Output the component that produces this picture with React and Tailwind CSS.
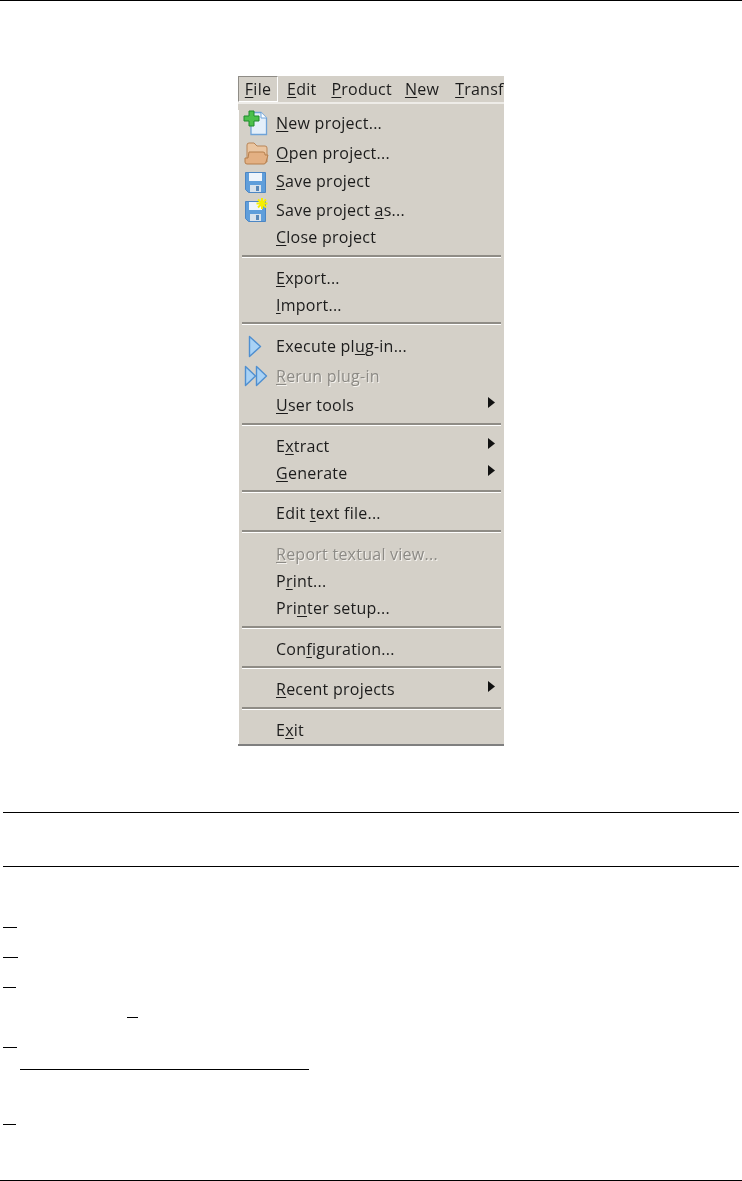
const FONT = "font-['Open_Sans','Liberation_Sans',sans-serif]";

function NewIcon() {
  return (
    <svg width="26" height="26" viewBox="0 0 26 26">
      <path d="M8 2.500h10l5.500 5.500v16.500H8z" fill="#e4effa" stroke="#6fa3d8" strokeWidth="1.300" />
      <path d="M18 2.500V8h5.500" fill="#fff" stroke="#6fa3d8" strokeWidth="1" />
      <path d="M6 1h5v5h5v5h-5v5H6v-5H1V6h5z" fill="#4cc04c" stroke="#1f8a2c" strokeWidth="1" />
    </svg>
  );
}

function FolderIcon() {
  return (
    <svg width="25" height="23" viewBox="0 0 25 23">
      <path d="M3 20V3q0-2 2-2h5l3 3h8q2 0 2 2v14z" fill="#eac6a2" stroke="#b98556" strokeWidth="1" />
      <path d="M5 10h14q2 0 2 2v1h3l-2 7q-.5 2-2 2H3q-2 0-2-2v-4h3z" fill="#e3b083" stroke="#b57e4c" strokeWidth="1" />
    </svg>
  );
}

function FloppyIcon({ star }) {
  return (
    <svg width="24" height="24" viewBox="0 0 24 24">
      <path d="M1.500 3.500h20v20h-17l-3-3z" fill="#5f9edb" stroke="#4c86c4" strokeWidth="1" />
      <path d="M5 4h13v8H5z" fill="#eef4fb" />
      <path d="M6 16h11v7H6z" fill="#d8e2ec" />
      <path d="M12 17h3v5h-3z" fill="#5a88b8" />
      {star && <path d="M18 0v11M12.500 5.500h11M14 1.500l8 8M22 1.500l-8 8" stroke="#f5ee00" strokeWidth="2" />}
    </svg>
  );
}

function PlayIcon() {
  return (
    <svg className="mr-[2px]" width="14" height="23" viewBox="0 0 14 23">
      <path d="M1.500 1.500v20L12.500 11.500z" fill="#a9d2f5" stroke="#4f8fd0" strokeWidth="1.400" strokeLinejoin="round" />
    </svg>
  );
}

function DoublePlayIcon() {
  return (
    <svg width="24" height="22" viewBox="0 0 24 22">
      <path d="M1.500 1.500v19L11.500 11z" fill="#a9d2f5" stroke="#4f8fd0" strokeWidth="1.400" strokeLinejoin="round" />
      <path d="M12.500 1.500v19L22.500 11z" fill="#a9d2f5" stroke="#4f8fd0" strokeWidth="1.400" strokeLinejoin="round" />
    </svg>
  );
}

function Item({ pre, key_, post, icon, disabled, sub, className }) {
  return (
    <div className={`flex h-[26px] items-center ${className}`}>
      <div className="mr-[4px] flex w-[33px] shrink-0 justify-center pl-[1px]">{icon}</div>
      <span
        className={
          disabled
            ? "pb-[1px] text-[#8c8a85] [text-shadow:1px_1px_0_#f4f2ee]"
            : "pb-[1px] text-[#1c1c1c]"
        }
      >
        {pre}
        <u className="underline-offset-2">{key_}</u>
        {post}
      </span>
      {sub && (
        <svg className="mb-[5px] ml-auto mr-[9px]" width="7" height="11" viewBox="0 0 7 11">
          <path d="M0 0l7 5.500L0 11z" fill="#111" />
        </svg>
      )}
    </div>
  );
}

function Sep({ className }) {
  return <div className={`ml-[3px] mr-[3px] h-[3px] border-t-2 border-b border-t-[#8f8c86] border-b-white ${className}`} />;
}

function Rule({ className }) {
  return <div className={`h-px bg-black ${className}`} />;
}

function Menu() {
  return (
    <div className={`ml-[238px] mt-[75px] w-[266px] overflow-hidden bg-[#d4d0c8] text-[16px] leading-[20px] tracking-[0.25px] blur-[0.4px] ${FONT}`}>
      <div className="flex h-[26px] items-center whitespace-nowrap text-[#1c1c1c]">
        <div className="flex h-[26px] w-[40px] shrink-0 items-center justify-center border border-b-white border-l-[#8f8c86] border-r-white border-t-[#8f8c86]">
          <span><u className="underline-offset-2">F</u>ile</span>
        </div>
        <span className="ml-[9px]"><u className="underline-offset-2">E</u>dit</span>
        <span className="ml-[15px]"><u className="underline-offset-2">P</u>roduct</span>
        <span className="ml-[13px]"><u className="underline-offset-2">N</u>ew</span>
        <span className="ml-[16px]"><u className="underline-offset-2">T</u>ransform</span>
      </div>
      <div className="h-[2px] bg-[#eeece8]" />
      <div className="border-l border-l-white pb-[1px]">
        <Item className="mt-[6px]" key_="N" post="ew project..." icon={<NewIcon />} />
        <Item className="mt-[4px]" key_="O" post="pen project..." icon={<FolderIcon />} />
        <Item className="mt-[2px]" key_="S" post="ave project" icon={<FloppyIcon />} />
        <Item className="mt-[3px]" pre="Save project " key_="a" post="s..." icon={<FloppyIcon star />} />
        <Item className="mt-[1px]" key_="C" post="lose project" />
        <Sep className="mt-[5px]" />
        <Item className="mt-[7px]" key_="E" post="xport..." />
        <Item className="mt-[1px]" key_="I" post="mport..." />
        <Sep className="mt-[4px]" />
        <Item className="mt-[8px]" pre="Execute pl" key_="u" post="g-in..." icon={<PlayIcon />} />
        <Item className="mt-[4px]" key_="R" post="erun plug-in" icon={<DoublePlayIcon />} disabled />
        <Item className="mt-[3px]" key_="U" post="ser tools" sub />
        <Sep className="mt-[5px]" />
        <Item className="mt-[7px]" pre="E" key_="x" post="tract" sub />
        <Item className="mt-[1px]" key_="G" post="enerate" sub />
        <Sep className="mt-[4px]" />
        <Item className="mt-[7px]" pre="Edit " key_="t" post="ext file..." />
        <Sep className="mt-[4px]" />
        <Item className="mt-[8px]" key_="R" post="eport textual view..." disabled />
        <Item className="mt-[1px]" pre="P" key_="r" post="int..." />
        <Item className="mt-[1px]" pre="Pri" key_="n" post="ter setup..." />
        <Sep className="mt-[5px]" />
        <Item className="mt-[7px]" pre="Con" key_="f" post="iguration..." />
        <Sep className="mt-[4px]" />
        <Item className="mt-[7px]" key_="R" post="ecent projects" sub />
        <Sep className="mt-[5px]" />
        <Item className="mt-[7px]" pre="E" key_="x" post="it" />
      </div>
      <div className="h-[2px] bg-[#7f7f7f]" />
    </div>
  );
}

export default function App() {
  return (
    <div className="flex h-[1181px] w-[742px] flex-col overflow-hidden bg-white">
      <Rule />
      <Menu />
      <Rule className="mx-[3px] mt-[66px]" />
      <Rule className="mx-[3px] mt-[53px]" />
      <Rule className="ml-[3px] mt-[60px] w-[14px]" />
      <Rule className="ml-[3px] mt-[29px] w-[15px]" />
      <Rule className="ml-[3px] mt-[29px] w-[13px]" />
      <Rule className="ml-[127px] mt-[29px] w-[11px]" />
      <Rule className="ml-[3px] mt-[29px] w-[14px]" />
      <Rule className="ml-[20px] mt-[21px] w-[289px]" />
      <Rule className="ml-[3px] mt-[54px] w-[13px]" />
      <Rule className="mt-auto" />
    </div>
  );
}
